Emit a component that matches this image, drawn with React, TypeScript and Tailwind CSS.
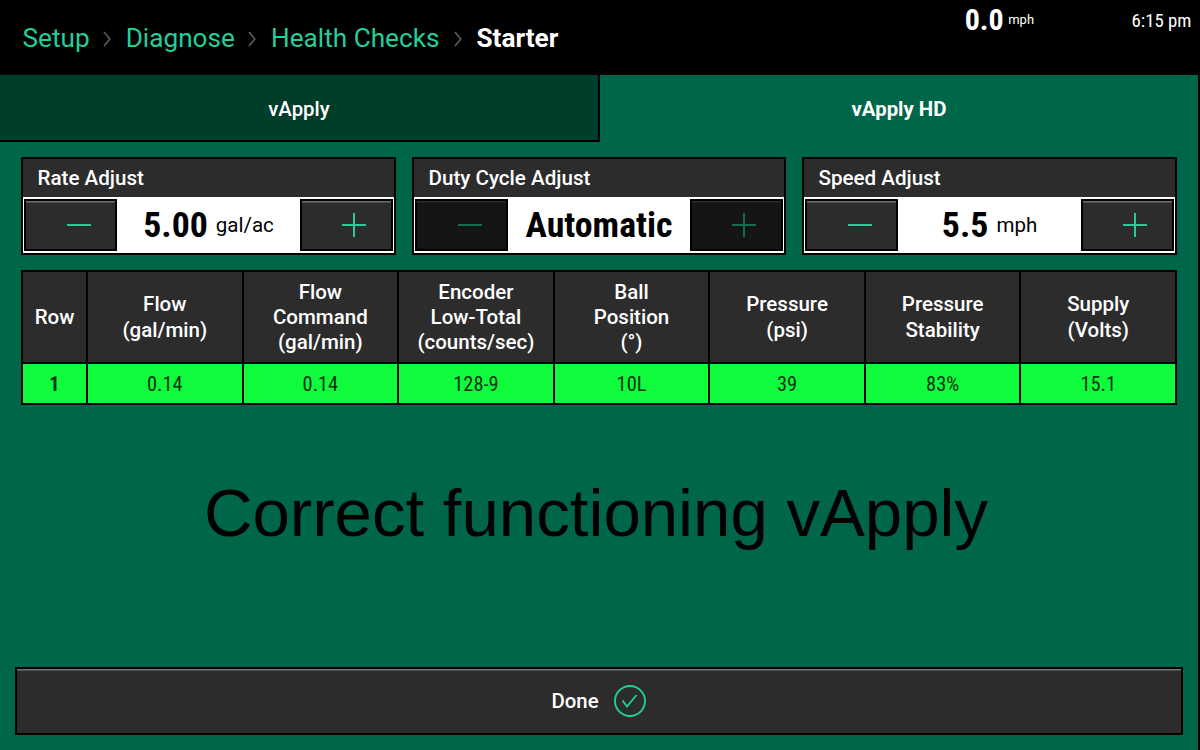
import React from 'react';

const CONDENSED = "font-['Roboto_Condensed',Roboto,sans-serif] font-stretch-condensed";

const Chevron = ({ className }: { className: string }) => (
  <svg className={className} width="8" height="16" viewBox="0 0 8 16" fill="none" stroke="#5c5c5c" strokeWidth="1.6">
    <path d="M1 1 L6.8 8 L1 15" />
  </svg>
);

const StepButton = ({ type, disabled }: { type: 'minus' | 'plus', disabled?: boolean }) => (
  <button
    className={`flex h-[52px] w-[93px] shrink-0 items-center justify-center border-2 border-black ${
      type === 'plus' ? 'pl-[15px]' : 'pl-4'
    } ${disabled ? 'bg-[#151515] shadow-[inset_0_1.5px_0_#2d2d2d]' : 'bg-[#2c2c2c] shadow-[inset_0_1.5px_0_#707070]'}`}
  >
    <svg width="26" height="26" viewBox="0 0 26 26" fill="none" stroke={disabled ? '#146b50' : '#2cc99c'} strokeWidth="2">
      <path d="M1 13 H25" />
      {type === 'plus' && <path d="M13 1 V25" />}
    </svg>
  </button>
);

const AdjustCard = ({
  title,
  value,
  unit,
  disabled
}: {
  title: string,
  value: string,
  unit?: string,
  disabled?: boolean
}) => (
  <div className="h-[98px] border-2 border-black bg-[#2c2c2c]">
    <div className="h-[38px] pl-[14.5px] text-[20.6px] leading-[38px] font-medium text-white">{title}</div>
    <div className="flex h-14 items-center justify-between bg-white px-px">
      <StepButton type="minus" disabled={disabled} />
      <div className="flex items-center gap-[8px] text-black">
        <span className={`text-[35.8px] leading-[52px] font-bold ${CONDENSED}`}>{value}</span>
        {unit && <span className="text-[20.5px] leading-[52px]">{unit}</span>}
      </div>
      <StepButton type="plus" disabled={disabled} />
    </div>
  </div>
);

const columns = [
  { lines: ['Row'], value: '1' },
  { lines: ['Flow', '(gal/min)'], value: '0.14' },
  { lines: ['Flow', 'Command', '(gal/min)'], value: '0.14' },
  { lines: ['Encoder', 'Low-Total', '(counts/sec)'], value: '128-9' },
  { lines: ['Ball', 'Position', '(°)'], value: '10L' },
  { lines: ['Pressure', '(psi)'], value: '39' },
  { lines: ['Pressure', 'Stability'], value: '83%' },
  { lines: ['Supply', '(Volts)'], value: '15.1' }
];

const App = () => {
  return (
    <div className="flex h-[750px] w-[1200px] flex-col overflow-hidden bg-black font-[Roboto,sans-serif]">
      <header className="flex h-[75px] shrink-0 justify-between text-white">
        <nav className="flex h-[75px] items-center pt-0.5 pl-[22.5px] text-[26.2px] text-[#20cf9c]">
          <span>Setup</span>
          <Chevron className="mr-[15px] ml-[13px]" />
          <span>Diagnose</span>
          <Chevron className="mr-[15px] ml-[13px]" />
          <span>Health Checks</span>
          <Chevron className="mr-[15px] ml-[14px]" />
          <span className="font-bold text-white">Starter</span>
        </nav>
        <div className="flex h-10 items-center pr-[8.5px]">
          <span className={`pb-0.5 text-[30px] font-bold ${CONDENSED}`}>0.0</span>
          <span className="ml-[4.5px] text-[13px]">mph</span>
          <span className={`ml-[97.5px] pt-0.5 text-[18.8px] ${CONDENSED}`}>6:15 pm</span>
        </div>
      </header>

      <main className="flex w-[1198px] grow flex-col bg-[#006649]">
        <div className="flex h-[67px] shrink-0 text-[20.4px] text-white">
          <button className="w-[600px] border-r-2 border-b-2 border-black bg-[#003d2b] pt-[3px] font-medium">vApply</button>
          <button className="grow pt-px font-bold">vApply HD</button>
        </div>

        <div className="mt-[15px] ml-[21px] grid w-[1156px] shrink-0 grid-cols-[375px_374px_375px] gap-4">
          <AdjustCard title="Rate Adjust" value="5.00" unit="gal/ac" />
          <AdjustCard title="Duty Cycle Adjust" value="Automatic" disabled />
          <AdjustCard title="Speed Adjust" value="5.5" unit="mph" />
        </div>

        <div className="mt-[15px] ml-[21px] grid h-[135px] w-[1156px] shrink-0 grid-cols-[63px_repeat(7,1fr)] grid-rows-[90px_39px] gap-0.5 border-2 border-black bg-black">
          {columns.map((col, i) => (
            <div key={i} className="flex flex-col items-center justify-center bg-[#2c2c2c] pt-px text-[20.5px] leading-[25.3px] font-medium text-white">
              {col.lines.map((line) => (
                <span key={line}>{line}</span>
              ))}
            </div>
          ))}
          {columns.map((col, i) => (
            <div
              key={i}
              className={`flex items-center justify-center bg-[#10fb3c] pt-px text-[20.4px] text-[#0b3312] ${CONDENSED} ${i === 0 ? 'font-bold' : ''}`}
            >
              {col.value}
            </div>
          ))}
        </div>

        <div className="mt-[68px] pr-[6px] text-center font-['Liberation_Sans',sans-serif] text-[67.2px] leading-[80px] text-black">
          Correct functioning vApply
        </div>

        <button className="mt-auto mr-[15px] mb-[15px] ml-[15px] flex h-[68px] shrink-0 items-center justify-center gap-[14px] border-2 border-black bg-[#2c2c2c] text-[20.4px] font-medium text-white shadow-[inset_0_1.5px_0_#777777]">
          <span>Done</span>
          <svg width="34" height="34" viewBox="0 0 34 34" fill="none" stroke="#20cf9c" strokeWidth="1.9">
            <circle cx="17" cy="17" r="15" />
            <path d="M9.5 16.5 L14 22.5 L23.5 11" />
          </svg>
        </button>
      </main>
    </div>
  );
};

export default App;
